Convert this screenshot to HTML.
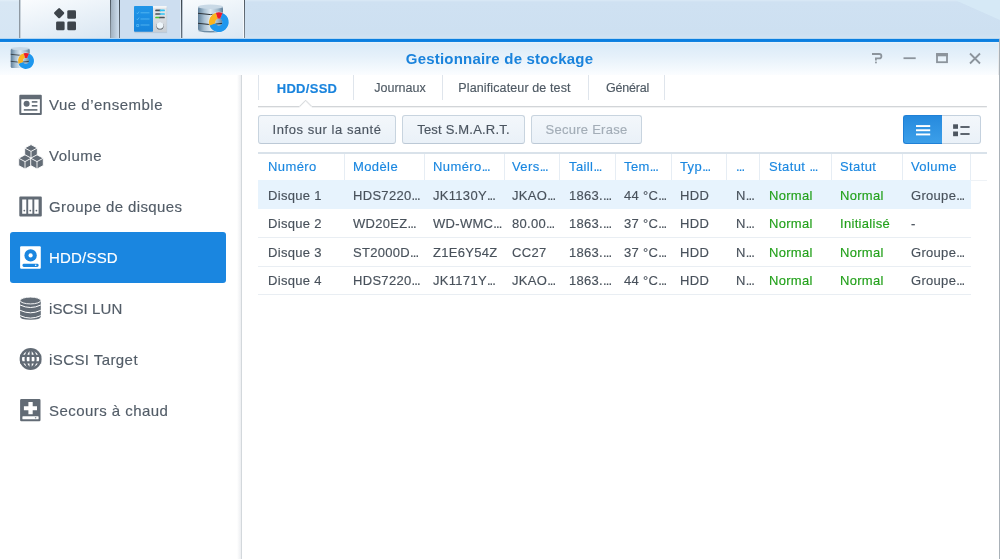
<!DOCTYPE html>
<html><head><meta charset="utf-8">
<style>
*{box-sizing:border-box;margin:0;padding:0}
html,body{width:1000px;height:559px;overflow:hidden;background:#fff;font-family:"Liberation Sans",sans-serif}
body{-webkit-font-smoothing:antialiased}
.tx,.cell,.tab,.btn,.wt{will-change:transform}
.cell,.tab,.btn,.tx{-webkit-text-stroke:0.15px currentColor}
.a{position:absolute}
#taskbar{left:0;top:0;width:1000px;height:39px;background:linear-gradient(#dae9f6 0,#cfe1f2 2px,#cde0f1 34px,#d3e4f3 39px)}
#tbdiag{left:955px;top:0;width:45px;height:20px;background:#d6e9f6;clip-path:polygon(0 0,100% 0,100% 100%)}
#blueline{left:0;top:39px;width:1000px;height:3px;background:linear-gradient(#0c7fe0,#0a7ee0 66%,#1887e2)}
#blueline2{left:0;top:38px;width:1000px;height:1px;background:#b4d7f3}
#titlebar{left:0;top:42px;width:999px;height:33px;background:linear-gradient(#e6f2fb 0,#dbebf8 2px,#e6f1fa 45%,#fbfdff 100%)}
#rborder{left:999px;top:39px;width:1px;height:520px;background:#a9b1b8}
.tb{top:0;height:39px}
.sb-item{position:absolute;left:10px;width:216px;height:51px;border-radius:3px}
.sb-item .ic{position:absolute;left:9px;top:14px;width:22px;height:22px}
.sb-item .tx{position:absolute;left:39px;top:17px;font-size:15px;color:#525c67;white-space:nowrap;line-height:18px}
.sb-item.sel{background:#1a86e0}
.sb-item.sel .tx{color:#fff}
.tab{position:absolute;top:75px;height:25px;font-size:12.5px;color:#4e5963;text-align:center;line-height:25px;white-space:nowrap}
.tsep{position:absolute;top:75px;width:1px;height:25px;background:#dfe5ec}
.btn{position:absolute;top:115px;height:29px;border:1px solid #c8d4df;border-bottom-color:#bcc9d6;border-radius:3px;background:linear-gradient(#f3f7fb,#eaf1f8);font-size:13px;color:#4b5560;line-height:27px;text-align:center;white-space:nowrap}
.hd{position:absolute;top:154px;height:26px;font-size:13px;color:#1a87e0;line-height:26px;white-space:nowrap}
.csep{position:absolute;top:154px;width:1px;height:26px;background:#e6edf4}
.cell{position:absolute;font-size:13px;color:#48515b;white-space:nowrap;line-height:18px;letter-spacing:0.3px}
.g{color:#22a01a}
.el{letter-spacing:-0.9px}
.cell.hc{color:#1a87e0;letter-spacing:0.4px}
.rline{position:absolute;left:258px;width:713px;height:1px;background:#e9eef3}
</style></head><body>
<div id="taskbar" class="a"></div>
<div id="tbdiag" class="a"></div>
<!-- taskbar buttons -->
<div class="a tb" style="left:0;width:19px;background:linear-gradient(#e2eef8 0,#d8e7f4 2px,#d6e6f4)"></div>
<div class="a tb" style="left:19px;width:1px;background:#8e98a1"></div>
<div class="a tb" style="left:20px;width:1px;background:#c9d2da"></div>
<div class="a tb" style="left:21px;width:89px;background:linear-gradient(165deg,#fafcfe 0%,#e9f1f8 50%,#d9e6f2 100%)"></div>
<div class="a tb" style="left:110px;width:1px;background:linear-gradient(#4e5862,#8f9aa5)"></div>
<div class="a tb" style="left:111px;width:8px;background:linear-gradient(90deg,#a2b2c1,#cfdfef)"></div>
<div class="a tb" style="left:119px;width:1px;background:linear-gradient(#3f4952,#6f7b87)"></div>
<div class="a tb" style="left:120px;width:62px;background:#cddef0"></div>
<div class="a tb" style="left:180px;width:1px;background:#dfe9f3"></div>
<div class="a tb" style="left:181px;width:1px;background:linear-gradient(#3d464e,#6a7682)"></div>
<div class="a tb" style="left:182px;width:1px;background:#b8c4cf"></div>
<div class="a tb" style="left:183px;width:60px;background:linear-gradient(165deg,#f8fbfd 0%,#e9f1f8 50%,#dce8f3 100%)"></div>
<div class="a tb" style="left:243px;width:1px;background:#f6f9fc"></div>
<div class="a tb" style="left:244px;width:1px;background:linear-gradient(#505a63,#7d8994)"></div>
<div id="blueline2" class="a"></div>
<div id="blueline" class="a"></div>
<div id="titlebar" class="a"></div>
<div id="rborder" class="a"></div>
<div class="a" style="left:998px;top:42px;width:1px;height:517px;background:#e9ebed"></div>
<div class="a" style="left:0;top:75px;width:999px;height:484px;background:#fff"></div>
<div class="a wt" style="left:0;width:999px;text-align:center;top:50px;font-size:15px;font-weight:bold;color:#1a83dc;line-height:18px;letter-spacing:0.2px">Gestionnaire de stockage</div>
<!-- sidebar border -->
<div class="a" style="left:237px;top:75px;width:4px;height:484px;background:linear-gradient(90deg,rgba(230,233,236,0),#eceef1)"></div>
<div class="a" style="left:241px;top:75px;width:1px;height:484px;background:#d3d8dc"></div>

<div class="sb-item" style="top:79px"><div class="tx" style="letter-spacing:0.5px">Vue d’ensemble</div></div>
<div class="sb-item" style="top:130px"><div class="tx" style="letter-spacing:0.53px">Volume</div></div>
<div class="sb-item" style="top:181px"><div class="tx" style="letter-spacing:0.39px">Groupe de disques</div></div>
<div class="sb-item sel" style="top:232px"><div class="tx" style="letter-spacing:0.2px">HDD/SSD</div></div>
<div class="sb-item" style="top:283px"><div class="tx" style="letter-spacing:0.1px">iSCSI LUN</div></div>
<div class="sb-item" style="top:334px"><div class="tx" style="letter-spacing:0.42px">iSCSI Target</div></div>
<div class="sb-item" style="top:385px"><div class="tx" style="letter-spacing:0.45px">Secours à chaud</div></div>

<!-- tabs -->
<div class="tsep" style="left:258px"></div>
<div class="tab" style="left:259.5px;width:94px;font-weight:bold;color:#1a84dd;font-size:13px;letter-spacing:0.3px;top:76px">HDD/SSD</div>
<div class="tsep" style="left:353px"></div>
<div class="tab" style="left:356px;width:88px;top:76px">Journaux</div>
<div class="tsep" style="left:442px"></div>
<div class="tab" style="left:442px;width:145px;top:76px;letter-spacing:0.12px">Planificateur de test</div>
<div class="tsep" style="left:588px"></div>
<div class="tab" style="left:590px;width:75px;top:76px;letter-spacing:-0.2px">Général</div>
<div class="tsep" style="left:664px"></div>

<!-- buttons -->
<div class="btn" style="left:258px;width:138px;letter-spacing:0.55px;">Infos sur la santé</div>
<div class="btn" style="left:402px;width:123px;letter-spacing:0.2px;">Test S.M.A.R.T.</div>
<div class="btn" style="left:531px;width:111px;color:#a3adb7;letter-spacing:0.25px;">Secure Erase</div>
<div class="a" style="left:903px;top:115px;width:39px;height:29px;border-radius:3px 0 0 3px;border:1px solid #1f80d6;border-right:none;background:linear-gradient(#268ade,#3c9fe9)"></div>
<div class="a" style="left:942px;top:115px;width:39px;height:29px;border:1px solid #c4d1de;border-left:none;border-radius:0 3px 3px 0;background:linear-gradient(#f3f7fb,#eaf1f8)"></div>

<!-- grid -->
<div class="a" style="left:258px;top:152px;width:729px;height:2px;background:#d9e2ea"></div>
<div class="a" style="left:258px;top:180px;width:729px;height:1px;background:#eef2f6"></div>
<div class="a" style="left:258px;top:180px;width:713px;height:29px;background:#e7f3fd"></div>
<div class="csep" style="left:344px"></div>
<div class="csep" style="left:424px"></div>
<div class="csep" style="left:504px"></div>
<div class="csep" style="left:559px"></div>
<div class="csep" style="left:615px"></div>
<div class="csep" style="left:671px"></div>
<div class="csep" style="left:726px"></div>
<div class="csep" style="left:759px"></div>
<div class="csep" style="left:831px"></div>
<div class="csep" style="left:902px"></div>
<div class="csep" style="left:970px"></div>
<div class="cell hc" style="left:268.3px;top:157.5px">Numéro</div>
<div class="cell hc" style="left:353.4px;top:157.5px">Modèle</div>
<div class="cell hc" style="left:433.0px;top:157.5px">Numéro<span class="el">...</span></div>
<div class="cell hc" style="left:512.0px;top:157.5px">Vers<span class="el">...</span></div>
<div class="cell hc" style="left:568.5px;top:157.5px">Taill<span class="el">...</span></div>
<div class="cell hc" style="left:624.4px;top:157.5px">Tem<span class="el">...</span></div>
<div class="cell hc" style="left:680.0px;top:157.5px">Typ<span class="el">...</span></div>
<div class="cell hc" style="left:736.0px;top:157.5px"><span class="el">...</span></div>
<div class="cell hc" style="left:768.8px;top:157.5px">Statut <span class="el">...</span></div>
<div class="cell hc" style="left:840.4px;top:157.5px">Statut</div>
<div class="cell hc" style="left:911.4px;top:157.5px">Volume</div>
<div class="cell" style="left:268.3px;top:186.5px">Disque 1</div>
<div class="cell" style="left:353.4px;top:186.5px">HDS7220<span class="el">...</span></div>
<div class="cell" style="left:433.0px;top:186.5px">JK1130Y<span class="el">...</span></div>
<div class="cell" style="left:512.0px;top:186.5px">JKAO<span class="el">...</span></div>
<div class="cell" style="left:568.5px;top:186.5px">1863.<span class="el">...</span></div>
<div class="cell" style="left:624.4px;top:186.5px">44 °C<span class="el">...</span></div>
<div class="cell" style="left:680.0px;top:186.5px">HDD</div>
<div class="cell" style="left:736.0px;top:186.5px">N<span class="el">...</span></div>
<div class="cell g" style="left:768.8px;top:186.5px">Normal</div>
<div class="cell g" style="left:840.4px;top:186.5px">Normal</div>
<div class="cell" style="left:911.4px;top:186.5px">Groupe<span class="el">...</span></div>
<div class="cell" style="left:268.3px;top:215.1px">Disque 2</div>
<div class="cell" style="left:353.4px;top:215.1px">WD20EZ<span class="el">...</span></div>
<div class="cell" style="left:433.0px;top:215.1px">WD-WMC<span class="el">...</span></div>
<div class="cell" style="left:512.0px;top:215.1px">80.00<span class="el">...</span></div>
<div class="cell" style="left:568.5px;top:215.1px">1863.<span class="el">...</span></div>
<div class="cell" style="left:624.4px;top:215.1px">37 °C<span class="el">...</span></div>
<div class="cell" style="left:680.0px;top:215.1px">HDD</div>
<div class="cell" style="left:736.0px;top:215.1px">N<span class="el">...</span></div>
<div class="cell g" style="left:768.8px;top:215.1px">Normal</div>
<div class="cell g" style="left:840.4px;top:215.1px">Initialisé</div>
<div class="cell" style="left:911.4px;top:215.1px">-</div>
<div class="cell" style="left:268.3px;top:243.9px">Disque 3</div>
<div class="cell" style="left:353.4px;top:243.9px">ST2000D<span class="el">...</span></div>
<div class="cell" style="left:433.0px;top:243.9px">Z1E6Y54Z</div>
<div class="cell" style="left:512.0px;top:243.9px">CC27</div>
<div class="cell" style="left:568.5px;top:243.9px">1863.<span class="el">...</span></div>
<div class="cell" style="left:624.4px;top:243.9px">37 °C<span class="el">...</span></div>
<div class="cell" style="left:680.0px;top:243.9px">HDD</div>
<div class="cell" style="left:736.0px;top:243.9px">N<span class="el">...</span></div>
<div class="cell g" style="left:768.8px;top:243.9px">Normal</div>
<div class="cell g" style="left:840.4px;top:243.9px">Normal</div>
<div class="cell" style="left:911.4px;top:243.9px">Groupe<span class="el">...</span></div>
<div class="cell" style="left:268.3px;top:272.3px">Disque 4</div>
<div class="cell" style="left:353.4px;top:272.3px">HDS7220<span class="el">...</span></div>
<div class="cell" style="left:433.0px;top:272.3px">JK1171Y<span class="el">...</span></div>
<div class="cell" style="left:512.0px;top:272.3px">JKAO<span class="el">...</span></div>
<div class="cell" style="left:568.5px;top:272.3px">1863.<span class="el">...</span></div>
<div class="cell" style="left:624.4px;top:272.3px">44 °C<span class="el">...</span></div>
<div class="cell" style="left:680.0px;top:272.3px">HDD</div>
<div class="cell" style="left:736.0px;top:272.3px">N<span class="el">...</span></div>
<div class="cell g" style="left:768.8px;top:272.3px">Normal</div>
<div class="cell g" style="left:840.4px;top:272.3px">Normal</div>
<div class="cell" style="left:911.4px;top:272.3px">Groupe<span class="el">...</span></div>
<div class="rline" style="top:237px"></div>
<div class="rline" style="top:266px"></div>
<div class="rline" style="top:294px"></div>
<svg class="a" style="left:0;top:0;z-index:5" width="1000" height="559" viewBox="0 0 1000 559">
<defs>
  <linearGradient id="cyl" x1="0" x2="1" y1="0" y2="0">
    <stop offset="0" stop-color="#5f7f99"/><stop offset="0.25" stop-color="#a9c0d2"/><stop offset="0.5" stop-color="#dce8f1"/><stop offset="0.8" stop-color="#9fb7ca"/><stop offset="1" stop-color="#5d7d97"/>
  </linearGradient>
  <linearGradient id="cpb" x1="0" x2="0" y1="0" y2="1"><stop offset="0" stop-color="#2196e8"/><stop offset="1" stop-color="#1684dc"/></linearGradient>
  <linearGradient id="cpg" x1="0" x2="0" y1="0" y2="1"><stop offset="0" stop-color="#e6e9ec"/><stop offset="1" stop-color="#c9cfd5"/></linearGradient>
</defs>
<!-- main menu icon -->
<g fill="#3d444b">
  <rect x="55.2" y="9.2" width="7.9" height="7.9" rx="1.2" transform="rotate(45 59.15 13.15)"/>
  <rect x="67.3" y="10.2" width="8.7" height="8.5" rx="1.3"/>
  <rect x="56.1" y="21.5" width="8.5" height="8.8" rx="1.3"/>
  <rect x="67.3" y="21.5" width="8.7" height="8.8" rx="1.3"/>
</g>
<!-- control panel icon -->
<rect x="134" y="6.3" width="32.6" height="26" fill="#9aa7b3" opacity="0.35" transform="translate(0.5,0.8)"/>
<rect x="153" y="6.3" width="13.6" height="25.6" fill="url(#cpg)"/>
<rect x="153" y="6.3" width="13.6" height="1.2" fill="#fbfcfd"/>
<rect x="134" y="6" width="19" height="25.8" rx="0.8" fill="url(#cpb)"/>
<g stroke="#63c0f5" stroke-width="0.9" fill="none" opacity="0.8">
  <path d="M136.5 12.8l1 1 1.6-2.2M140.5 12.8h9M136.5 18.8l1 1 1.6-2.2M140.5 19h9M136.7 24.5h2v2h-2zM140.5 25h9"/>
</g>
<g stroke-width="1.7" stroke-linecap="round">
  <path d="M156 10.4h4" stroke="#4b5157"/><path d="M160.5 10.4h3.6" stroke="#2ec2f4"/>
  <path d="M156 14h4" stroke="#4b5157"/><path d="M160.5 14h3.6" stroke="#2ec2f4"/>
  <path d="M156 17.5h3.5" stroke="#48c431"/><path d="M160 17.5h4" stroke="#4b5157"/>
</g>
<circle cx="160" cy="25.9" r="3.6" fill="#555b61"/>
<circle cx="160" cy="25.3" r="3.4" fill="#eef6fb"/>
<!-- storage manager icon (taskbar) -->
<g>
  <rect x="198" y="6.5" width="25" height="24.5" rx="2" fill="url(#cyl)"/>
  <ellipse cx="210.5" cy="6.8" rx="12.5" ry="2.2" fill="#c9d9e6"/>
  <path d="M198 31q12.5 3 25 0" fill="#6d8ca5"/>
  <path d="M198 13.3q12.5 2.6 25 0M198 23.3q12.5 2.6 25 0" stroke="#2c3338" stroke-width="1" fill="none"/>
</g>
<g id="donut1">
<path fill-rule="evenodd" d="M208.3 22.1a10.5 10.5 0 1 0 21.0 0a10.5 10.5 0 1 0 -21.0 0zM215.20000000000002 22.1a3.6 3.6 0 1 0 7.2 0a3.6 3.6 0 1 0 -7.2 0z" fill="#ffffff" opacity="0.5"/>
<path d="M222.51 12.92A9.9 9.9 0 1 1 209.50 25.49L215.42 23.33A3.6 3.6 0 1 0 220.15 18.76Z" fill="#1e97ee"/>
<path d="M209.50 25.49A9.9 9.9 0 0 1 215.91 12.63L217.75 18.66A3.6 3.6 0 0 0 215.42 23.33Z" fill="#fbb420"/>
<path d="M215.91 12.63A9.9 9.9 0 0 1 222.51 12.92L220.15 18.76A3.6 3.6 0 0 0 217.75 18.66Z" fill="#ec1c2a"/>
</g>
<!-- title app icon -->
<g>
  <rect x="10.7" y="48.5" width="19" height="19.5" rx="1.6" fill="url(#cyl)"/>
  <ellipse cx="20.2" cy="48.6" rx="9.5" ry="1.6" fill="#c9d9e6"/>
  <path d="M10.7 54.3q9.5 2 19 0M10.7 61.3q9.5 2 19 0" stroke="#2c3338" stroke-width="0.8" fill="none"/>
</g>
<g id="donut2">
<path fill-rule="evenodd" d="M17.4 60.9a8.6 8.6 0 1 0 17.2 0a8.6 8.6 0 1 0 -17.2 0zM23.0 60.9a3.0 3.0 0 1 0 6.0 0a3.0 3.0 0 1 0 -6.0 0z" fill="#ffffff" opacity="0.5"/>
<path d="M29.00 53.48A8.0 8.0 0 1 1 18.48 63.64L23.18 61.93A3.0 3.0 0 1 0 27.12 58.12Z" fill="#1e97ee"/>
<path d="M18.48 63.64A8.0 8.0 0 0 1 23.66 53.25L25.12 58.03A3.0 3.0 0 0 0 23.18 61.93Z" fill="#fbb420"/>
<path d="M23.66 53.25A8.0 8.0 0 0 1 29.00 53.48L27.12 58.12A3.0 3.0 0 0 0 25.12 58.03Z" fill="#ec1c2a"/>
</g>
<!-- window controls -->
<g stroke="#8c949c" stroke-width="1.8" fill="none">
  <path d="M872 54h7.2a2.2 2.2 0 0 1 0 4.4h-3.3v2"/>
  <path d="M903.5 58.2h12.2"/>
  <path d="M970 53.5l10 10M980 53.5l-10 10"/>
</g>
<rect x="875.1" y="61.6" width="1.7" height="1.7" fill="#8c949c"/>
<rect x="937" y="54" width="10" height="8.2" stroke="#8c949c" stroke-width="1.8" fill="none"/>
<rect x="936.1" y="53.1" width="11.8" height="3.2" fill="#8c949c"/>

<!-- sidebar icons -->
<g fill="#626b75">
  <!-- vue d'ensemble -->
  <path fill-rule="evenodd" d="M19.3 95.8a1 1 0 0 1 1-1h20.5a1 1 0 0 1 1 1v18.2a1 1 0 0 1-1 1h-20.5a1 1 0 0 1-1-1zM21.3 99.2v13.8h18.6v-13.8z"/>
  <circle cx="26.6" cy="103.8" r="3"/>
  <rect x="31.8" y="101.1" width="5.6" height="1.6"/>
  <rect x="31.8" y="105" width="5.6" height="1.6"/>
  <rect x="23.8" y="109.1" width="13.6" height="1.6"/>
  <!-- groupe de disques -->
  <path fill-rule="evenodd" d="M19.3 197.4a1 1 0 0 1 1-1h20.5a1 1 0 0 1 1 1v18.2a1 1 0 0 1-1 1h-20.5a1 1 0 0 1-1-1zM22.2 199.6v14.2h4.1v-14.2zM28.2 199.6v14.2h4.2v-14.2zM34.3 199.6v14.2h4.3v-14.2z"/>
  <circle cx="24.3" cy="210.6" r="0.9"/><circle cx="30.3" cy="210.6" r="0.9"/><circle cx="36.4" cy="210.6" r="0.9"/>
  <!-- secours a chaud -->
  <path fill-rule="evenodd" d="M20.1 400.2a1.2 1.2 0 0 1 1.2-1.2h18a1.2 1.2 0 0 1 1.2 1.2v19.9a1.2 1.2 0 0 1-1.2 1.2h-18a1.2 1.2 0 0 1-1.2-1.2zM28.4 402v4.3h-4.5v4h4.5v3.9h4.3v-3.9h4.3v-4h-4.3v-4.3zM23 416.2a0.6 0.6 0 0 0-0.6 0.6v1.9a0.6 0.6 0 0 0 0.6 0.6h15a0.6 0.6 0 0 0 0.6-0.6v-1.9a0.6 0.6 0 0 0-0.6-0.6z"/>
  <!-- globe -->
  <circle cx="30.6" cy="359" r="11"/>
</g>
<circle cx="30.6" cy="359" r="8.6" fill="#fff"/>
<g fill="none" stroke="#626b75" stroke-width="2.2">
  <ellipse cx="30.6" cy="359" rx="5" ry="9"/>
  <path d="M30.6 349v20M20 355.8h21.2M20 362.3h21.2"/>
</g>
<circle cx="35.6" cy="417.8" r="0.8" fill="#8a929a"/>
<!-- volume cubes -->
<g fill="#636c76" stroke="#fff" stroke-width="0.9" stroke-linejoin="round">
  <path d="M31 144.6l6.3 3.4v7.4l-6.3 3.4l-6.3-3.4v-7.4z"/>
  <path d="M25 154.8l6.3 3.4v7.4l-6.3 3.4l-6.3-3.4v-7.4z"/>
  <path d="M37 154.8l6.3 3.4v7.4l-6.3 3.4l-6.3-3.4v-7.4z"/>
</g>
<g stroke="#fff" stroke-width="0.9" fill="none">
  <path d="M24.7 148l6.3 3.4l6.3-3.4M31 151.4v7.2"/>
  <path d="M18.7 158.2l6.3 3.4l6.3-3.4M25 161.6v7.2"/>
  <path d="M30.7 158.2l6.3 3.4l6.3-3.4M37 161.6v7.2"/>
</g>
<!-- iSCSI LUN database -->
<g>
  <path d="M20.1 300.5v16q0 3.3 10.35 3.3t10.35-3.3v-16z" fill="#636c76"/>
  <ellipse cx="30.45" cy="300.5" rx="10.35" ry="3.4" fill="#636c76" stroke="#fff" stroke-width="0.9"/>
  <path d="M20.1 305q10.35 5 20.7 0M20.1 310.3q10.35 5 20.7 0M20.1 315.6q10.35 5 20.7 0" stroke="#fff" stroke-width="1" fill="none"/>
</g>
<!-- HDD selected icon -->
<g>
  <rect x="20.1" y="246.3" width="20.7" height="22.5" rx="1" fill="#fff"/>
  <circle cx="30.6" cy="255.4" r="6.2" fill="#1a86e0"/>
  <circle cx="30.6" cy="255.4" r="2.1" fill="#fff"/>
  <rect x="22.5" y="263.7" width="16.1" height="3.2" rx="1.4" fill="#1a86e0"/>
  <circle cx="35.7" cy="265.3" r="0.8" fill="#fff"/>
</g>
<!-- notch under active tab -->
<path d="M258 107.5h41.3l6.3-6.3l6.3 6.3h675" stroke="#f0f1f2" stroke-width="1" fill="none"/>
<path d="M258 106.5h41.3l6.3-6.3l6.3 6.3h675" stroke="#d2d5d8" stroke-width="1" fill="none"/>
<!-- view toggle icons -->
<g fill="#fff">
  <rect x="916" y="125.1" width="14.2" height="1.9"/>
  <rect x="916" y="129.3" width="14.2" height="1.9"/>
  <rect x="916" y="133.5" width="14.2" height="1.9"/>
</g>
<g fill="#4d5660">
  <rect x="953.1" y="124.3" width="4.9" height="4.5"/>
  <rect x="953.1" y="131.5" width="4.9" height="4.7"/>
  <rect x="960.4" y="126.1" width="9.2" height="1.8"/>
  <rect x="960.4" y="133.1" width="9.2" height="1.8"/>
</g>
</svg>

</body></html>
